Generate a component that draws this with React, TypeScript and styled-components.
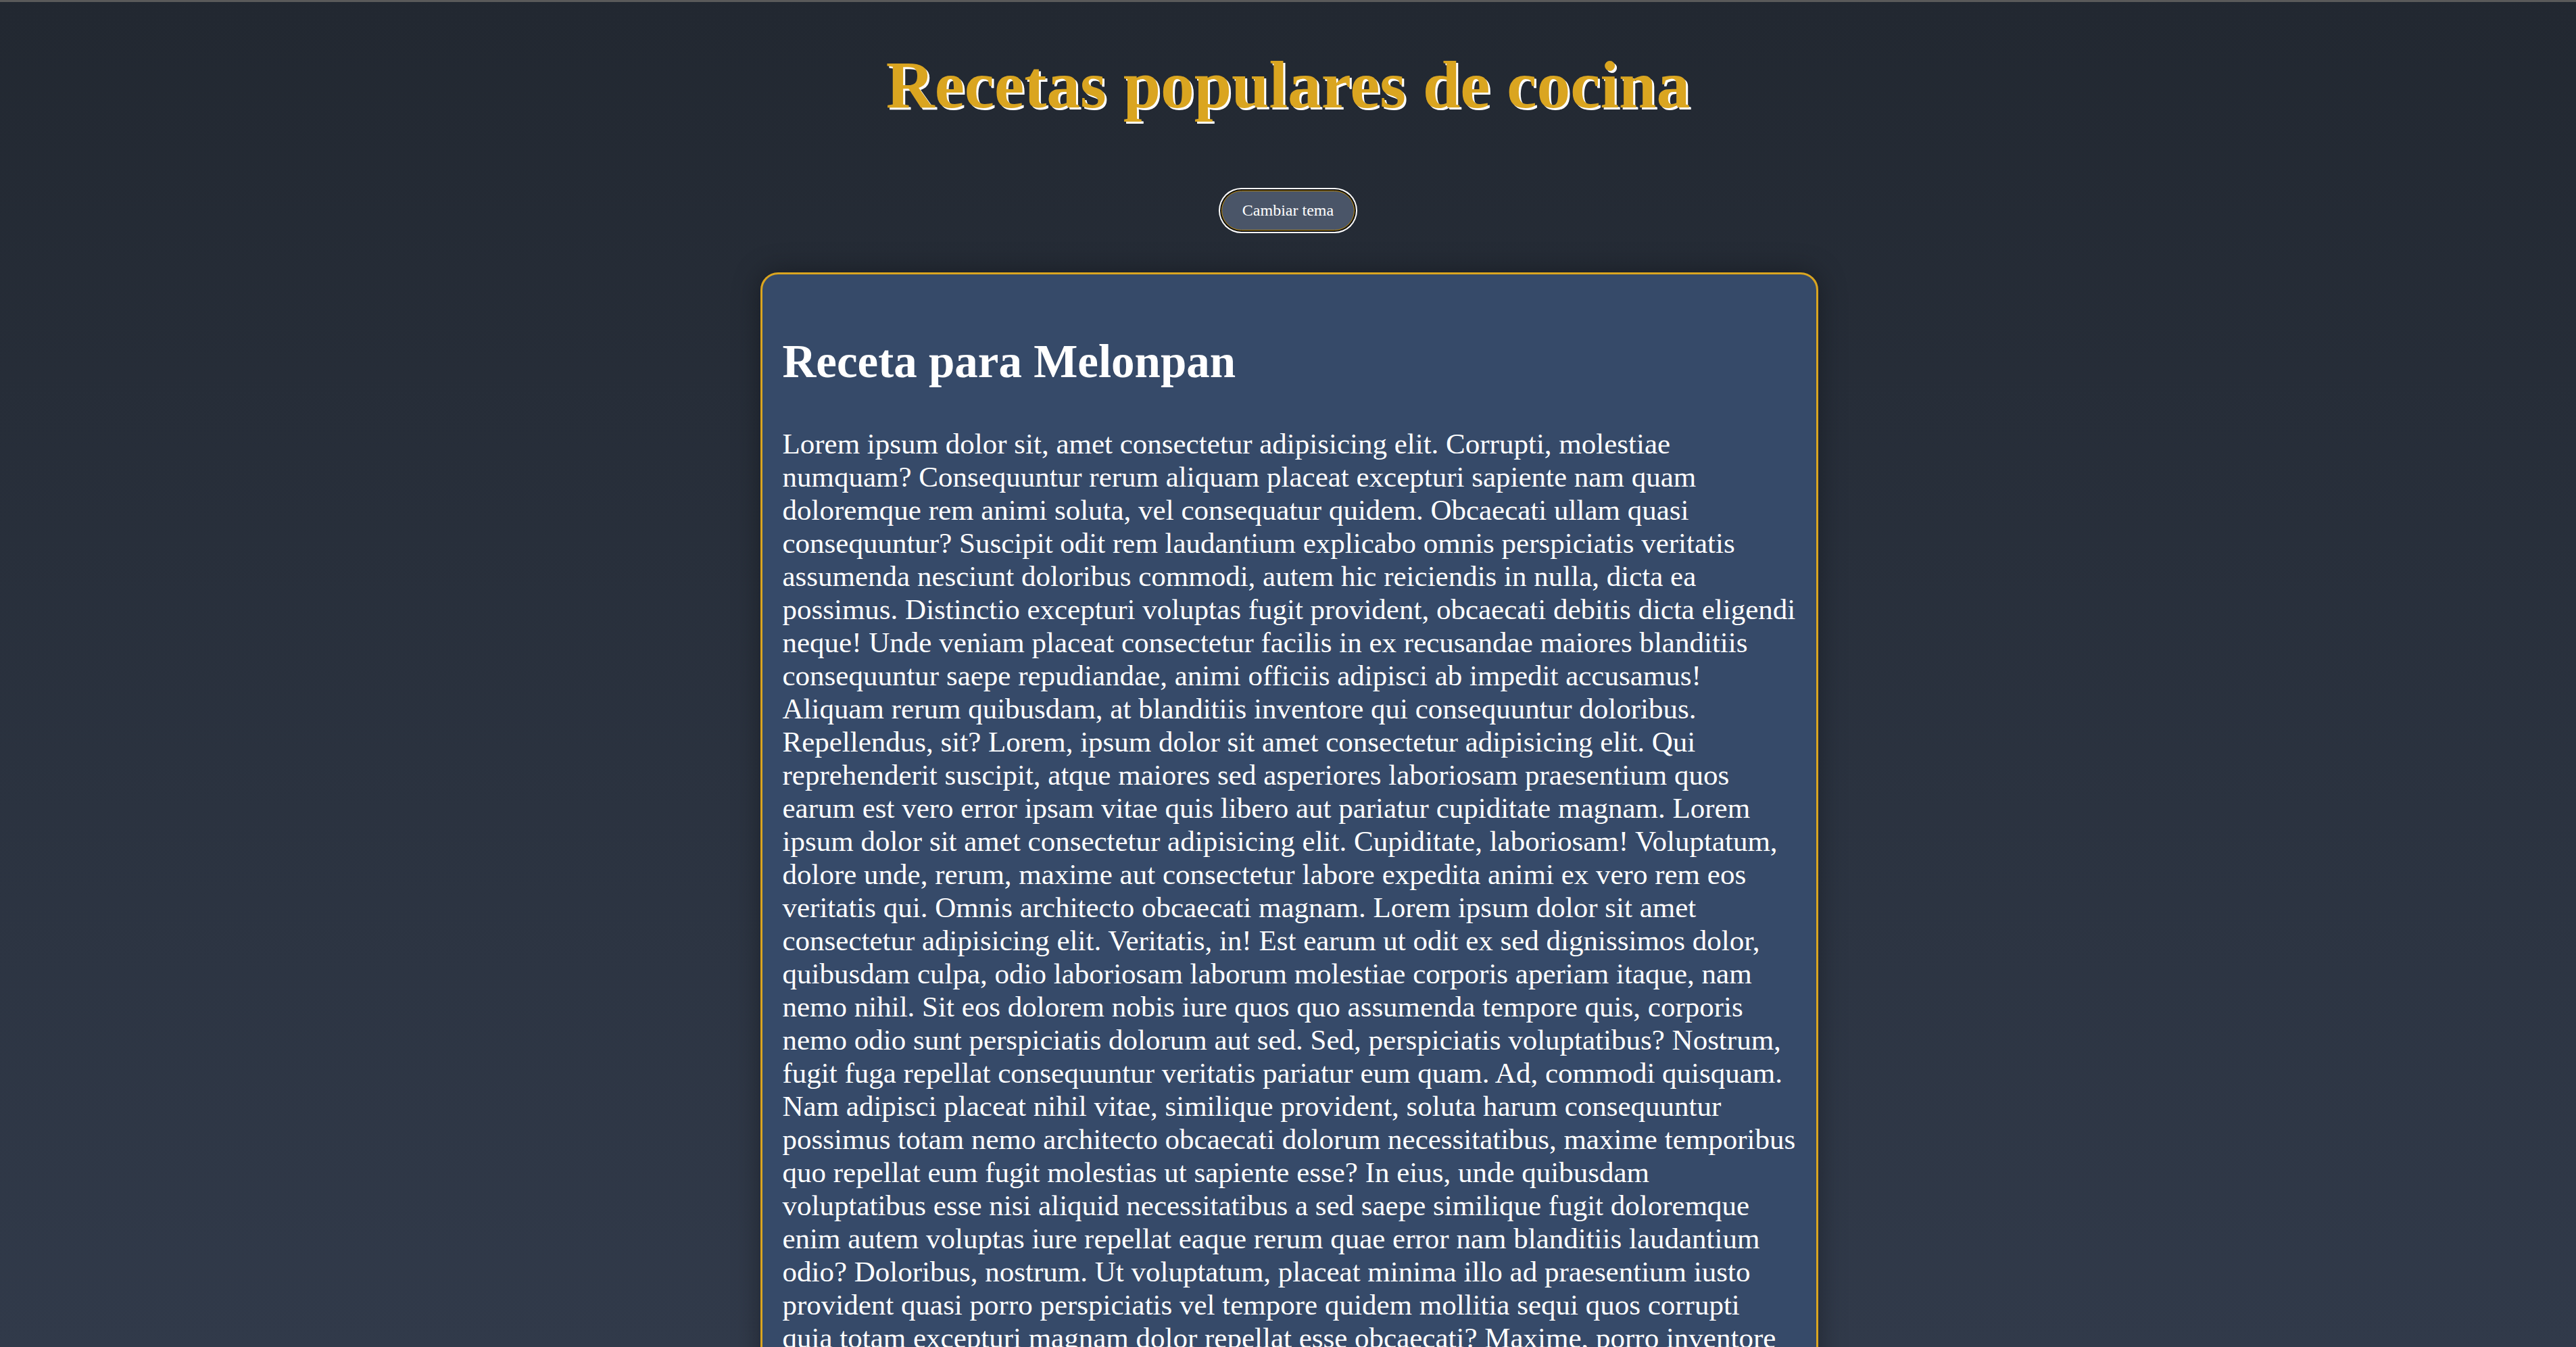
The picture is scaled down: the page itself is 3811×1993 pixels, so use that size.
import React from "react";
import styled, { createGlobalStyle } from "styled-components";

const Global = createGlobalStyle`
  html, body {
    margin: 0;
    padding: 0;
  }
  body {
    min-height: 100vh;
    background: linear-gradient(180deg, #222831 0%, #313a4a 100%) fixed;
    font-family: "Liberation Serif", "Times New Roman", serif;
    color: #ffffff;
  }
`;

const Page = styled.div`
  border-top: 3px solid #5a5a5a;
  display: flex;
  flex-direction: column;
  align-items: center;
`;

const Title = styled.h1`
  margin: 65px 0 0;
  font-size: 99.5px;
  font-weight: bold;
  color: #daa520;
  text-shadow: 3px 3px 0 #ffffff;
  text-align: center;
`;

const ThemeButton = styled.button`
  margin-top: 99px;
  padding: 15px 30px;
  font-family: "Liberation Serif", "Times New Roman", serif;
  font-size: 24px;
  color: #ffffff;
  background: #4a5568;
  border: 1px solid #b8860b;
  border-radius: 40px;
  box-shadow: 0 0 0 2px #101010, 0 0 0 4px #ffffff;
  cursor: pointer;
`;

const Card = styled.article`
  box-sizing: border-box;
  width: 1565px;
  margin: 62px 0 0 3px;
  padding: 33px 30px 40px;
  background: #364a69;
  border: 3px solid #daa520;
  border-radius: 26px;
  box-shadow: 0 0 40px rgba(0, 0, 0, 0.35);
`;

const CardTitle = styled.h2`
  margin: 57px 0;
  font-size: 69px;
  font-weight: bold;
  color: #ffffff;
`;

const Body = styled.p`
  margin: 0;
  font-size: 43px;
  color: #ffffff;
`;

const TEXT =
  "Lorem ipsum dolor sit, amet consectetur adipisicing elit. Corrupti, molestiae numquam? Consequuntur rerum aliquam placeat excepturi sapiente nam quam doloremque rem animi soluta, vel consequatur quidem. Obcaecati ullam quasi consequuntur? Suscipit odit rem laudantium explicabo omnis perspiciatis veritatis assumenda nesciunt doloribus commodi, autem hic reiciendis in nulla, dicta ea possimus. Distinctio excepturi voluptas fugit provident, obcaecati debitis dicta eligendi neque! Unde veniam placeat consectetur facilis in ex recusandae maiores blanditiis consequuntur saepe repudiandae, animi officiis adipisci ab impedit accusamus! Aliquam rerum quibusdam, at blanditiis inventore qui consequuntur doloribus. Repellendus, sit? Lorem, ipsum dolor sit amet consectetur adipisicing elit. Qui reprehenderit suscipit, atque maiores sed asperiores laboriosam praesentium quos earum est vero error ipsam vitae quis libero aut pariatur cupiditate magnam. Lorem ipsum dolor sit amet consectetur adipisicing elit. Cupiditate, laboriosam! Voluptatum, dolore unde, rerum, maxime aut consectetur labore expedita animi ex vero rem eos veritatis qui. Omnis architecto obcaecati magnam. Lorem ipsum dolor sit amet consectetur adipisicing elit. Veritatis, in! Est earum ut odit ex sed dignissimos dolor, quibusdam culpa, odio laboriosam laborum molestiae corporis aperiam itaque, nam nemo nihil. Sit eos dolorem nobis iure quos quo assumenda tempore quis, corporis nemo odio sunt perspiciatis dolorum aut sed. Sed, perspiciatis voluptatibus? Nostrum, fugit fuga repellat consequuntur veritatis pariatur eum quam. Ad, commodi quisquam. Nam adipisci placeat nihil vitae, similique provident, soluta harum consequuntur possimus totam nemo architecto obcaecati dolorum necessitatibus, maxime temporibus quo repellat eum fugit molestias ut sapiente esse? In eius, unde quibusdam voluptatibus esse nisi aliquid necessitatibus a sed saepe similique fugit doloremque enim autem voluptas iure repellat eaque rerum quae error nam blanditiis laudantium odio? Doloribus, nostrum. Ut voluptatum, placeat minima illo ad praesentium iusto provident quasi porro perspiciatis vel tempore quidem mollitia sequi quos corrupti quia totam excepturi magnam dolor repellat esse obcaecati? Maxime, porro inventore sint nulla tempora doloribus quas, voluptates ipsum unde minus rerum.";

export default function App() {
  return (
    <>
      <Global />
      <Page>
        <Title>Recetas populares de cocina</Title>
        <ThemeButton type="button">Cambiar tema</ThemeButton>
        <Card>
          <CardTitle>Receta para Melonpan</CardTitle>
          <Body>{TEXT}</Body>
        </Card>
      </Page>
    </>
  );
}
